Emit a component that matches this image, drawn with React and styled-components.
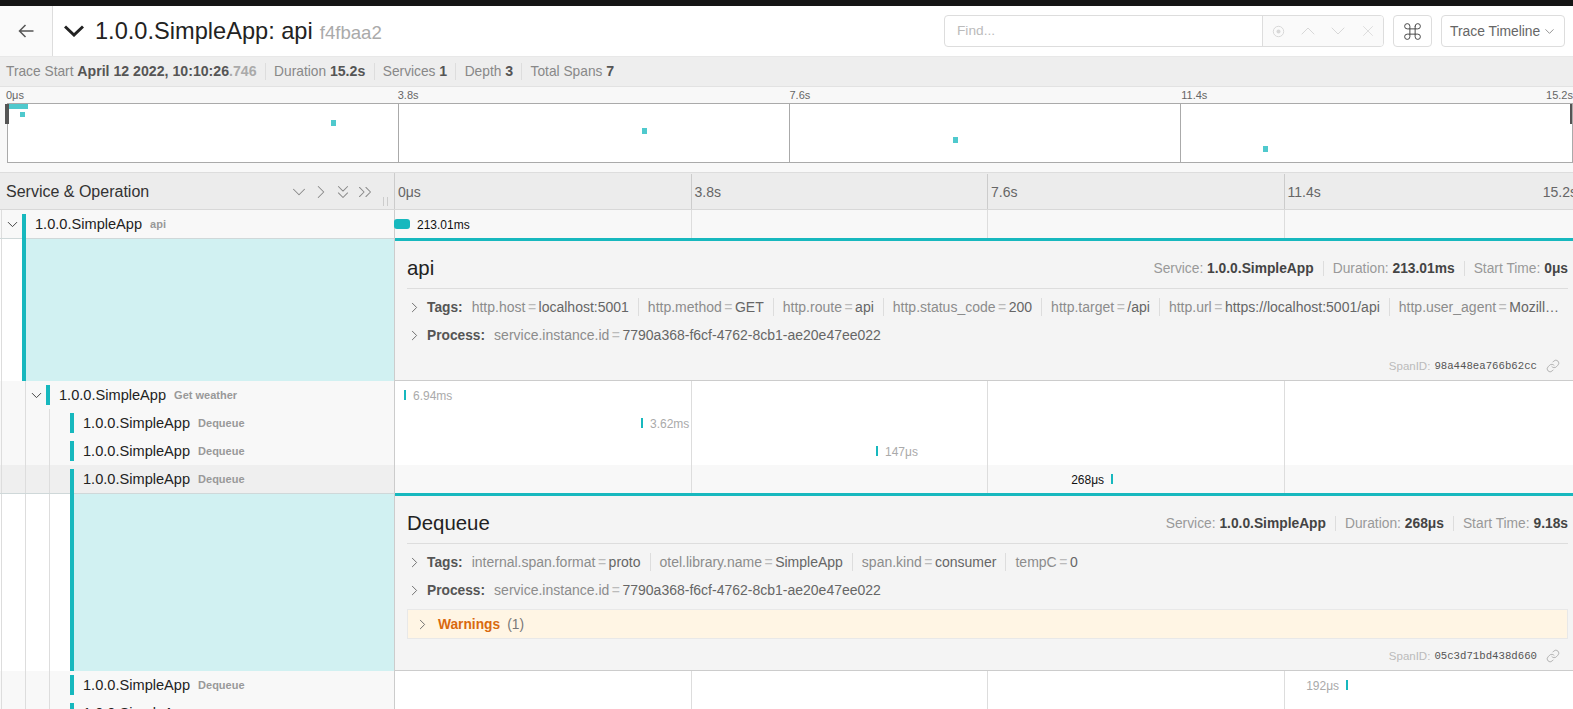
import React from 'react';
import styled, { createGlobalStyle } from 'styled-components';
import { ChevronDown, ChevronRight, ChevronUp, ChevronsDown, ChevronsRight, Command, Link, X } from 'lucide-react';

const TOTAL = 15.2;
const TEAL = '#17b8be';

const GlobalStyle = createGlobalStyle`
  html, body { margin: 0; padding: 0; height: 100%; overflow: hidden; background: #fff; }
  body { font-family: "Liberation Sans", Arial, sans-serif; color: #333; }
  * { box-sizing: border-box; }
`;

const Page = styled.div`
  width: 100vw;
  height: 100vh;
  overflow: hidden;
`;

const TopStrip = styled.div`
  height: 6px;
  background: #151515;
`;

const Header = styled.header`
  display: flex;
  align-items: stretch;
  height: 51px;
  border-bottom: 1px solid #e8e8e8;
  background: #fff;
`;

const BackLink = styled.a`
  display: flex;
  align-items: center;
  justify-content: center;
  width: 53px;
  background: #fafafa;
  border-right: 1px solid #ddd;
  color: #555;
`;

const TitleBlock = styled.div`
  display: flex;
  align-items: center;
  flex: 1;
  padding-left: 11px;
`;

const Title = styled.h1`
  margin: 0 0 0 11px;
  font-size: 23.6px;
  font-weight: 400;
  color: #222;
`;

const TraceHash = styled.small`
  margin-left: 7px;
  font-size: 18.6px;
  color: #aaa;
`;

const Controls = styled.div`
  display: flex;
  align-items: center;
  gap: 9px;
  padding-right: 8px;
`;

const FindGroup = styled.div`
  display: flex;
  width: 440px;
  height: 32px;
  border: 1px solid #ddd;
  border-radius: 4px;
  overflow: hidden;
`;

const FindInput = styled.div`
  flex: 1;
  padding-left: 12px;
  font-size: 13.7px;
  line-height: 30px;
  color: #bbb;
  border-right: 1px solid #ddd;
`;

const FindActions = styled.div`
  display: grid;
  grid-template-columns: repeat(4, 30px);
  align-items: center;
  justify-items: center;
  width: 120px;
  background: #fafafa;
  color: #d8d8d8;
`;

const SquareButton = styled.div`
  display: flex;
  align-items: center;
  justify-content: center;
  width: 39px;
  height: 32px;
  border: 1px solid #ddd;
  border-radius: 4px;
  color: #444;
`;

const ViewSelect = styled.div`
  display: flex;
  align-items: center;
  gap: 2px;
  width: 124px;
  height: 32px;
  padding-left: 8px;
  border: 1px solid #ddd;
  border-radius: 4px;
  font-size: 13.85px;
  color: #666;
`;

const Summary = styled.div`
  display: flex;
  align-items: center;
  height: 30px;
  padding-left: 6px;
  background: #eee;
  border-bottom: 1px solid #e2e2e2;
  font-size: 13.75px;
`;

const SummaryItem = styled.span`
  color: #888;
  padding-right: 8.25px;
  margin-right: 8.25px;
  border-right: 1px solid #ddd;
  line-height: 16px;
  &:last-child { border-right: 0; }
  strong { color: #555; font-size: 14.15px; font-weight: 700; }
  em { color: #aaa; font-size: 14.15px; font-style: normal; font-weight: 700; }
`;

const Main = styled.main`
  width: 1580px;
`;

const Minimap = styled.section`
  height: 85px;
  padding: 0 7px 0 7px;
  background: #f8f8f8;
`;

const MiniLabels = styled.div`
  display: flex;
  height: 16px;
  margin-left: -1px;
  font-size: 11px;
  line-height: 16px;
  color: #666;
`;

const MiniLabelCell = styled.div`
  flex: 1;
  display: flex;
  justify-content: space-between;
`;

const MiniCanvas = styled.div`
  height: 60px;
  background: #fff;
  border: 1px solid #aaa;
  svg { display: block; overflow: visible; }
`;

const Ruler = styled.div`
  display: flex;
  height: 38px;
  background: #ececec;
  border-top: 1px solid #ddd;
  border-bottom: 1px solid #d8d8d8;
`;

const RulerLeft = styled.div`
  display: flex;
  align-items: center;
  flex: none;
  width: 395px;
  padding: 1px 0 0 6px;
  border-right: 1px solid #ccc;
  font-size: 16px;
  color: #333;
`;

const CollapseIcons = styled.div`
  display: flex;
  align-items: center;
  margin-left: auto;
  color: #888;
  svg { display: block; }
`;

const ResizeGrip = styled.div`
  align-self: flex-end;
  width: 5px;
  height: 9px;
  margin: 0 6px 3px 7px;
  border-left: 1px solid #ccc;
  border-right: 1px solid #ccc;
`;

const Lane = styled.div`
  position: relative;
  display: flex;
  flex: 1;
  background: ${p => (p.$tint ? '#f8f8f8' : '#fff')};
`;

const RulerLane = styled.div`
  display: flex;
  flex: 1;
  padding-top: 1px;
  font-size: 14px;
  color: #666;
`;

const RulerCell = styled.div`
  flex: 1;
  display: flex;
  align-items: center;
  justify-content: space-between;
  padding: 0 3px;
  border-left: 1px solid #ccc;
  &:first-child { border-left: 0; }
`;

const TickCell = styled.div`
  flex: 1;
  border-left: 1px solid #ddd;
  &:first-child { border-left: 0; }
`;

const Row = styled.div`
  display: flex;
  height: 28px;
`;

const RowLeft = styled.div`
  display: flex;
  align-items: stretch;
  flex: none;
  width: 395px;
  padding-left: 1px;
  background: ${p => (p.$active ? '#efefef' : '#f8f8f8')};
  border-right: 1px solid #ccc;
  white-space: nowrap;
`;

const Guide = styled.div`
  flex: none;
  width: 24px;
  border-left: 1px solid #ddd;
`;

const ToggleSlot = styled.div`
  flex: none;
  display: flex;
  align-items: center;
  justify-content: center;
  width: 21px;
  border-left: 1px solid #ddd;
  color: #444;
  svg { display: block; }
`;

const ColorBar = styled.div`
  flex: none;
  width: 4px;
  height: ${p => (p.$open ? '24px' : '20px')};
  margin-top: 4px;
  background: ${TEAL};
`;

const ServiceName = styled.span`
  align-self: center;
  margin-left: 9px;
  font-size: 14.6px;
  color: #222;
`;

const OperationName = styled.span`
  align-self: center;
  margin-left: 8px;
  font-size: 11px;
  font-weight: 700;
  color: #999;
`;

const SpanMark = styled.div`
  position: absolute;
  top: 9px;
  display: flex;
  flex-direction: ${p => (p.$flip ? 'row-reverse' : 'row')};
  align-items: center;
  gap: 7px;
  height: 10px;
`;

const SpanBar = styled.div`
  flex: none;
  width: ${p => (p.$root ? '16px' : '2px')};
  height: 10px;
  margin-left: ${p => (p.$root ? '-1px' : '0')};
  border-radius: ${p => (p.$root ? '3px' : '0')};
  background: ${TEAL};
`;

const SpanLabel = styled.span`
  margin-top: 2px;
  font-size: 12px;
  white-space: nowrap;
  color: ${p => (p.$strong ? '#111' : '#aaa')};
`;

const DetailRow = styled.div`
  display: flex;
  align-items: stretch;
`;

const DetailLeft = styled.div`
  display: flex;
  flex: none;
  width: 395px;
  padding-left: 1px;
  background: #fff;
  border-top: 1px solid #cfd8d9;
  border-right: 1px solid #ccc;
`;

const DetailBar = styled.div`
  flex: none;
  width: 4px;
  margin-top: -1px;
  background: ${TEAL};
`;

const DetailFill = styled.div`
  flex: 1;
  background: #d1f1f2;
`;

const Detail = styled.div`
  flex: 1;
  min-width: 0;
  padding: 0 12px;
  background: #f4f4f4;
  border-top: 3px solid ${TEAL};
  border-bottom: 1px solid #ccc;
`;

const DetailHead = styled.div`
  display: flex;
  align-items: center;
  justify-content: space-between;
  height: 48px;
  padding-top: 8px;
  border-bottom: 1px solid #ddd;
`;

const OperationTitle = styled.h2`
  margin: 0;
  font-size: 20.4px;
  font-weight: 400;
  color: #222;
`;

const Overview = styled.div`
  display: flex;
  font-size: 13.8px;
  color: #999;
`;

const OverviewItem = styled.span`
  padding: 0 9px;
  border-left: 1px solid #ddd;
  line-height: 15px;
  &:first-child { border-left: 0; }
  &:last-child { padding-right: 0; }
  strong { color: #444; font-weight: 700; }
`;

const Attributes = styled.div`
  margin-top: 4px;
`;

const AttrRow = styled.div`
  display: flex;
  align-items: center;
  height: 28px;
  font-size: 14px;
  color: #8c8c8c;
  white-space: nowrap;
`;

const AttrChevron = styled.span`
  flex: none;
  display: flex;
  width: 21.5px;
  margin-left: -1.5px;
  color: #666;
  svg { display: block; }
`;

const AttrLabel = styled.strong`
  flex: none;
  margin-right: 9px;
  font-size: 13.75px;
  font-weight: 700;
  color: #555;
`;

const AttrList = styled.div`
  display: flex;
  min-width: 0;
  overflow: hidden;
`;

const Attr = styled.span`
  padding: 0 9px;
  border-left: 1px solid #ddd;
  line-height: 18px;
  &:first-child { padding-left: 0; border-left: 0; }
  i { margin: 0 2.5px; font-style: normal; color: #bbb; }
  b { font-weight: 400; color: #666; }
`;

const Warnings = styled.div`
  display: flex;
  align-items: center;
  height: 30px;
  margin-top: 5px;
  padding-left: 6px;
  background: #fff5e4;
  border: 1px solid #e8e8e8;
  font-size: 13.75px;
  color: #777;
  ${AttrChevron} { width: 24px; margin-left: 0; }
  strong { margin: 0 7px 0 0; color: #d9690e; font-weight: 700; }
`;

const DetailFoot = styled.div`
  display: flex;
  align-items: center;
  justify-content: flex-end;
  gap: 4px;
  height: 22px;
  margin: 6px 0 3px;
  padding-right: 8px;
  font-size: 11.5px;
  color: #bbb;
  code { font-family: "Liberation Mono", monospace; font-size: 10.7px; color: #555; }
  svg { display: block; margin-left: 5px; color: #999; }
`;

const topTags = [
  ['http.host', 'localhost:5001'],
  ['http.method', 'GET'],
  ['http.route', 'api'],
  ['http.status_code', '200'],
  ['http.target', '/api'],
  ['http.url', 'https://localhost:5001/api'],
  ['http.user_agent', 'Mozill…'],
];

const dequeueTags = [
  ['internal.span.format', 'proto'],
  ['otel.library.name', 'SimpleApp'],
  ['span.kind', 'consumer'],
  ['tempC', '0'],
];

const processTags = [['service.instance.id', '7790a368-f6cf-4762-8cb1-ae20e47ee022']];

const spans = [
  {
    depth: 0, toggle: true, op: 'api', start: 0, label: '213.01ms', root: true, tint: true, strong: true,
    detail: {
      title: 'api', duration: '213.01ms', startTime: '0μs', tags: topTags, spanId: '98a448ea766b62cc',
    },
  },
  { depth: 1, toggle: true, op: 'Get weather', start: 0.115, label: '6.94ms' },
  { depth: 2, op: 'Dequeue', start: 3.155, label: '3.62ms' },
  { depth: 2, op: 'Dequeue', start: 6.17, label: '147μs' },
  {
    depth: 2, op: 'Dequeue', start: 9.185, label: '268μs', flip: true, tint: true, strong: true, active: true,
    detail: {
      title: 'Dequeue', duration: '268μs', startTime: '9.18s', tags: dequeueTags, warnings: 1, spanId: '05c3d71bd438d660',
    },
  },
  { depth: 2, op: 'Dequeue', start: 12.2, label: '192μs', flip: true },
  { depth: 2, op: 'Dequeue' },
];

const guides = depth => Array.from({ length: depth }, (_, i) => <Guide key={i} />);

const Ticks = () => (
  <>
    <TickCell />
    <TickCell />
    <TickCell />
    <TickCell />
  </>
);

const BackArrow = () => (
  <svg width="16" height="14" viewBox="0 0 16 14" fill="none" stroke="currentColor" strokeWidth="1.5">
    <path d="M15.5 7H1.5M7.5 1L1.5 7l6 6" />
  </svg>
);

const TitleChevron = () => (
  <svg width="20" height="12" viewBox="0 0 20 12" fill="none" stroke="#222" strokeWidth="3">
    <path d="M1 1.5l9 8.5 9-8.5" />
  </svg>
);

const TargetIcon = () => (
  <svg width="13" height="13" viewBox="0 0 13 13" fill="none" stroke="currentColor">
    <circle cx="6.5" cy="6.5" r="5.2" />
    <circle cx="6.5" cy="6.5" r="2" fill="currentColor" stroke="none" />
  </svg>
);

const MiniGraph = () => (
  <svg width="1563" height="58" viewBox="0 0 1563 58">
    {[390, 781, 1172].map(x => <rect key={x} x={x} y="0" width="1" height="58" fill="#aaa" />)}
    <g fill="#4fc9cd">
      <rect x="0" y="0" width="20" height="5" />
      <rect x="12" y="8" width="5" height="5" />
      <rect x="323" y="16" width="5" height="6" />
      <rect x="634" y="24" width="5" height="6" />
      <rect x="945" y="33" width="5" height="6" />
      <rect x="1255" y="42" width="5" height="6" />
    </g>
    <rect x="-3" y="0" width="4" height="20" fill="#555" />
    <rect x="1562" y="0" width="2" height="20" fill="#555" />
  </svg>
);

const AttrLine = ({ label, items }) => (
  <AttrRow>
    <AttrChevron><ChevronRight size={17} strokeWidth={1.3} /></AttrChevron>
    <AttrLabel>{label}:</AttrLabel>
    <AttrList>
      {items.map(([key, value]) => (
        <Attr key={key}>{key}<i>=</i><b>{value}</b></Attr>
      ))}
    </AttrList>
  </AttrRow>
);

const SpanDetail = ({ span }) => {
  const { detail } = span;
  return (
    <DetailRow>
      <DetailLeft>
        {guides(span.depth)}
        <ToggleSlot />
        <DetailBar />
        <DetailFill />
      </DetailLeft>
      <Detail>
        <DetailHead>
          <OperationTitle>{detail.title}</OperationTitle>
          <Overview>
            <OverviewItem>Service: <strong>1.0.0.SimpleApp</strong></OverviewItem>
            <OverviewItem>Duration: <strong>{detail.duration}</strong></OverviewItem>
            <OverviewItem>Start Time: <strong>{detail.startTime}</strong></OverviewItem>
          </Overview>
        </DetailHead>
        <Attributes>
          <AttrLine label="Tags" items={detail.tags} />
          <AttrLine label="Process" items={processTags} />
        </Attributes>
        {detail.warnings && (
          <Warnings>
            <AttrChevron><ChevronRight size={17} strokeWidth={1.3} /></AttrChevron>
            <strong>Warnings</strong> ({detail.warnings})
          </Warnings>
        )}
        <DetailFoot>
          SpanID: <code>{detail.spanId}</code>
          <Link size={14} strokeWidth={1.2} />
        </DetailFoot>
      </Detail>
    </DetailRow>
  );
};

const SpanRow = ({ span }) => {
  const pct = (span.start / TOTAL) * 100;
  const place = span.flip ? { right: `calc(${100 - pct}% - 2px)` } : { left: `${pct}%` };
  return (
    <>
      <Row>
        <RowLeft $active={span.active}>
          {guides(span.depth)}
          <ToggleSlot>{span.toggle && <ChevronDown size={17} strokeWidth={1.4} />}</ToggleSlot>
          <ColorBar $open={!!span.detail} />
          <ServiceName>1.0.0.SimpleApp</ServiceName>
          <OperationName>{span.op}</OperationName>
        </RowLeft>
        <Lane $tint={span.tint}>
          <Ticks />
          {span.label && (
            <SpanMark style={place} $flip={span.flip}>
              <SpanBar $root={span.root} />
              <SpanLabel $strong={span.strong}>{span.label}</SpanLabel>
            </SpanMark>
          )}
        </Lane>
      </Row>
      {span.detail && <SpanDetail span={span} />}
    </>
  );
};

export default function App() {
  return (
    <Page>
      <GlobalStyle />
      <TopStrip />
      <Header>
        <BackLink><BackArrow /></BackLink>
        <TitleBlock>
          <TitleChevron />
          <Title>1.0.0.SimpleApp: api<TraceHash>f4fbaa2</TraceHash></Title>
        </TitleBlock>
        <Controls>
          <FindGroup>
            <FindInput>Find...</FindInput>
            <FindActions>
              <TargetIcon />
              <ChevronUp size={24} strokeWidth={1} />
              <ChevronDown size={24} strokeWidth={1} />
              <X size={18} strokeWidth={1.1} />
            </FindActions>
          </FindGroup>
          <SquareButton><Command size={21} strokeWidth={1.1} /></SquareButton>
          <ViewSelect>Trace Timeline<ChevronDown size={15} strokeWidth={1.1} /></ViewSelect>
        </Controls>
      </Header>
      <Summary>
        <SummaryItem>Trace Start <strong>April 12 2022, 10:10:26</strong><em>.746</em></SummaryItem>
        <SummaryItem>Duration <strong>15.2s</strong></SummaryItem>
        <SummaryItem>Services <strong>1</strong></SummaryItem>
        <SummaryItem>Depth <strong>3</strong></SummaryItem>
        <SummaryItem>Total Spans <strong>7</strong></SummaryItem>
      </Summary>
      <Main>
        <Minimap>
          <MiniLabels>
            <MiniLabelCell>0μs</MiniLabelCell>
            <MiniLabelCell>3.8s</MiniLabelCell>
            <MiniLabelCell>7.6s</MiniLabelCell>
            <MiniLabelCell><span>11.4s</span><span>15.2s</span></MiniLabelCell>
          </MiniLabels>
          <MiniCanvas><MiniGraph /></MiniCanvas>
        </Minimap>
        <Ruler>
          <RulerLeft>
            Service &amp; Operation
            <CollapseIcons>
              <ChevronDown size={22} strokeWidth={1.1} />
              <ChevronRight size={22} strokeWidth={1.1} />
              <ChevronsDown size={22} strokeWidth={1.1} />
              <ChevronsRight size={22} strokeWidth={1.1} />
            </CollapseIcons>
            <ResizeGrip />
          </RulerLeft>
          <RulerLane>
            <RulerCell>0μs</RulerCell>
            <RulerCell>3.8s</RulerCell>
            <RulerCell>7.6s</RulerCell>
            <RulerCell><span>11.4s</span><span>15.2s</span></RulerCell>
          </RulerLane>
        </Ruler>
        {spans.map((span, i) => <SpanRow key={i} span={span} />)}
      </Main>
    </Page>
  );
}
